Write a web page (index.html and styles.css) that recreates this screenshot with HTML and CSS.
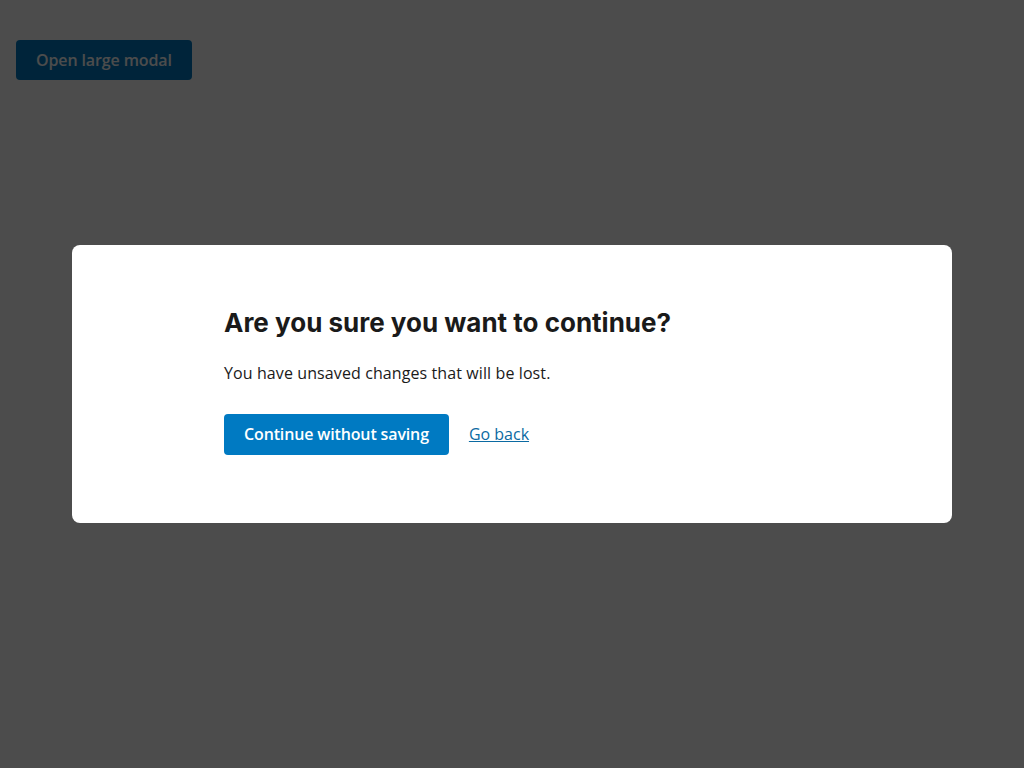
FILE: index.html
```html
<!DOCTYPE html>
<html lang="en">
<head>
<meta charset="utf-8">
<title>Modal</title>
<link rel="stylesheet" href="styles.css">
</head>
<body>
<main class="page">
  <button class="open-btn" type="button">Open large modal</button>
</main>
<div class="overlay">
  <div class="modal" role="dialog" aria-labelledby="modal-title">
    <div class="modal-content">
      <h2 id="modal-title" class="modal-title">Are you sure you want to continue?</h2>
      <p class="modal-text">You have unsaved changes that will be lost.</p>
      <div class="modal-actions">
        <button class="primary-btn" type="button">Continue without saving</button>
        <a class="link" href="#">Go back</a>
      </div>
    </div>
  </div>
</div>
</body>
</html>
```
FILE: styles.css
```css
html, body {
  margin: 0;
  padding: 0;
  height: 100%;
}
body {
  font-family: "Open Sans", "Noto Sans", sans-serif;
  background: #ffffff;
}
.page {
  padding: 40px 16px;
}
.open-btn {
  font-family: "Open Sans", sans-serif;
  font-weight: 600;
  font-size: 16px;
  letter-spacing: -0.12px;
  height: 40px;
  padding: 0 20px;
  border: none;
  border-radius: 4px;
  background: #007ac2;
  color: #ffffff;
}
.overlay {
  position: fixed;
  inset: 0;
  background: rgba(0, 0, 0, 0.7);
  display: flex;
  align-items: center;
  justify-content: center;
}
.modal {
  width: 880px;
  box-sizing: border-box;
  background: #ffffff;
  border-radius: 8px;
  padding: 59px 0 68px;
}
.modal-content {
  max-width: 576px;
  margin: 0 auto;
}
.modal-title {
  font-family: "Inter", sans-serif;
  font-weight: 700;
  font-size: 26px;
  line-height: 37.5px;
  color: #1a1a1a;
  margin: 0 0 19px;
}
.modal-text {
  font-size: 16px;
  letter-spacing: 0.1px;
  line-height: 24px;
  color: #1a1a1a;
  margin: 0 0 29px;
}
.modal-actions {
  display: flex;
  align-items: center;
  gap: 20px;
}
.primary-btn {
  font-family: "Open Sans", sans-serif;
  font-weight: 600;
  font-size: 16px;
  letter-spacing: -0.14px;
  height: 41px;
  padding: 0 20px;
  border: none;
  border-radius: 4px;
  background: #007ac2;
  color: #ffffff;
}
.link {
  font-size: 16px;
  color: #0b6aa2;
  text-decoration: underline;
}
```
